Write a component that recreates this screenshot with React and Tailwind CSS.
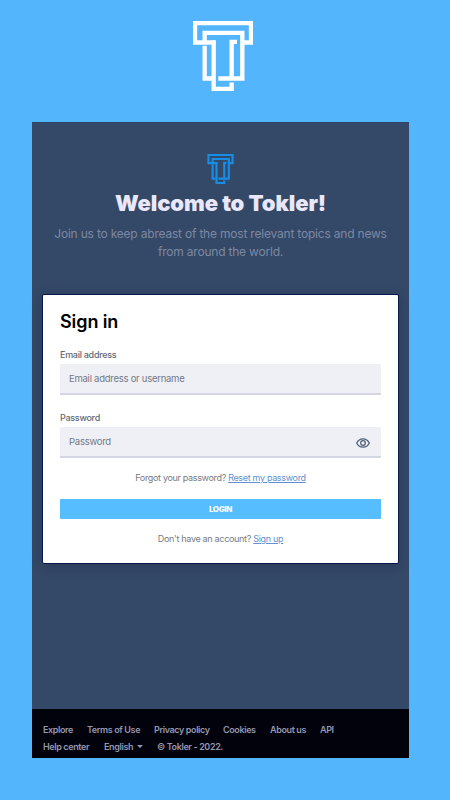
import React, { useState } from 'react';

const footerTop = [
  { label: "Explore", style: "w-[44px]" },
  { label: "Terms of Use", style: "w-[67px]" },
  { label: "Privacy policy", style: "w-[69px]" },
  { label: "Cookies", style: "w-[47px]" },
  { label: "About us", style: "w-[50px]" },
  { label: "API", style: "" },
];

function Logo({ className }) {
  return (
    <svg viewBox="0 0 180 209" fill="none" stroke="currentColor" className={className}>
      <path d="M62 58V203H116V184" />
      <path d="M68 64H6V6H174V64H148" />
      <path d="M35 64V35H148V172H76" />
      <path d="M35 74V172H57" />
      <path d="M132 62H116V172" />
    </svg>
  );
}

function EyeIcon() {
  return (
    <svg viewBox="0 0 14 10" className="mt-0.5 w-3.5 h-2.5" fill="none" stroke="#506078" strokeWidth="1.25">
      <path d="M.7 5C2 2.300 4.300.8 7 .8S12 2.300 13.300 5C12 7.700 9.700 9.200 7 9.200S2 7.700.7 5Z" />
      <circle cx="7" cy="5" r="2.300" />
    </svg>
  );
}

function Field({ id, label, placeholder, type, children }) {
  return (
    <div>
      <label htmlFor={id} className="block h-[18px] text-[9px] leading-[20px] font-medium tracking-[-0.28px] text-[#626874]">{label}</label>
      <div className="mt-px flex items-center h-[31px] pl-[9px] pr-[11px] pt-px bg-[#eff0f5] border-b-2 border-[#d3d6e3]">
        <input
          id={id}
          type={type}
          placeholder={placeholder}
          className="flex-1 min-w-0 bg-transparent outline-none text-[9.500px] tracking-[-0.26px] text-[#737985] placeholder:text-[#737985]"
        />
        {children}
      </div>
    </div>
  );
}

function App() {
  const [showPassword, setShowPassword] = useState(false);

  return (
    <div className="w-[450px] h-[800px] overflow-hidden flex flex-col items-center bg-[#53b5fb] font-['Inter',sans-serif]">
      <Logo className="mt-[21px] mr-1 w-[60px] h-[70px] shrink-0 text-white stroke-[13]" />

      <div className="mt-[31px] mr-[9px] w-[377px] h-[636px] shrink-0 flex flex-col bg-[#344867] border-t border-[#2c4468]">
        <div className="flex-1 flex flex-col items-center">
          <Logo className="mt-[31px] w-[27px] h-[30px] text-[#168ee5] stroke-[15]" />
          <h1 className="mt-1 text-[22px] leading-[30px] font-black tracking-[-0.1px] text-[#e9e7fa]">Welcome to Tokler!</h1>
          <p className="mt-[7px] text-center text-[12px] leading-[18px] tracking-[-0.2px] text-[#7c88a3]">
            Join us to keep abreast of the most relevant topics and news
            <br />
            from around the world.
          </p>

          <div className="mt-[33px] w-[357px] h-[270px] flex flex-col px-[17px] bg-white border border-[#07184a] rounded-[2px] shadow-[0_2px_12px_rgba(10,20,50,0.25)]">
            <h2 className="mt-[15px] text-[18px] leading-6 font-semibold tracking-[-0.1px] text-black">Sign in</h2>
            <div className="mt-[11px] flex flex-col gap-[13px]">
              <Field id="email" label="Email address" placeholder="Email address or username" type="text" />
              <Field id="password" label="Password" placeholder="Password" type={showPassword ? "text" : "password"}>
                <button type="button" aria-label="Toggle password" onClick={() => setShowPassword(!showPassword)}>
                  <EyeIcon />
                </button>
              </Field>
            </div>
            <p className="mt-[13px] text-center text-[9px] leading-[14px] tracking-[-0.33px] text-[#777b83]">
              Forgot your password? <a href="#" className="text-[#6290d0] underline">Reset my password</a>
            </p>
            <button type="button" className="mt-3.5 h-5 shrink-0 rounded-[1px] bg-[#56bdff] text-[8px] font-extrabold tracking-[-0.35px] text-white">LOGIN</button>
            <p className="mt-[13px] text-center text-[9px] leading-[14px] tracking-[-0.31px] text-[#777b83]">
              Don't have an account? <a href="#" className="text-[#6290d0] underline">Sign up</a>
            </p>
          </div>
        </div>

        <footer className="h-[49px] px-[11px] pt-3 bg-[#02020d] text-[9px] leading-[17px] font-semibold tracking-[-0.38px] text-[#9497ae] whitespace-nowrap">
          <nav className="flex">
            {footerTop.map((item) => (
              <a key={item.label} href="#" className={item.style}>{item.label}</a>
            ))}
          </nav>
          <div className="flex">
            <a href="#" className="w-[61px]">Help center</a>
            <button type="button" className="w-[53px] flex items-center gap-1">
              English
              <span className="border-x-[3px] border-x-transparent border-t-[3px] border-t-[#9497ae]"></span>
            </button>
            <span>© Tokler - 2022.</span>
          </div>
        </footer>
      </div>
    </div>
  );
}

export default App;
